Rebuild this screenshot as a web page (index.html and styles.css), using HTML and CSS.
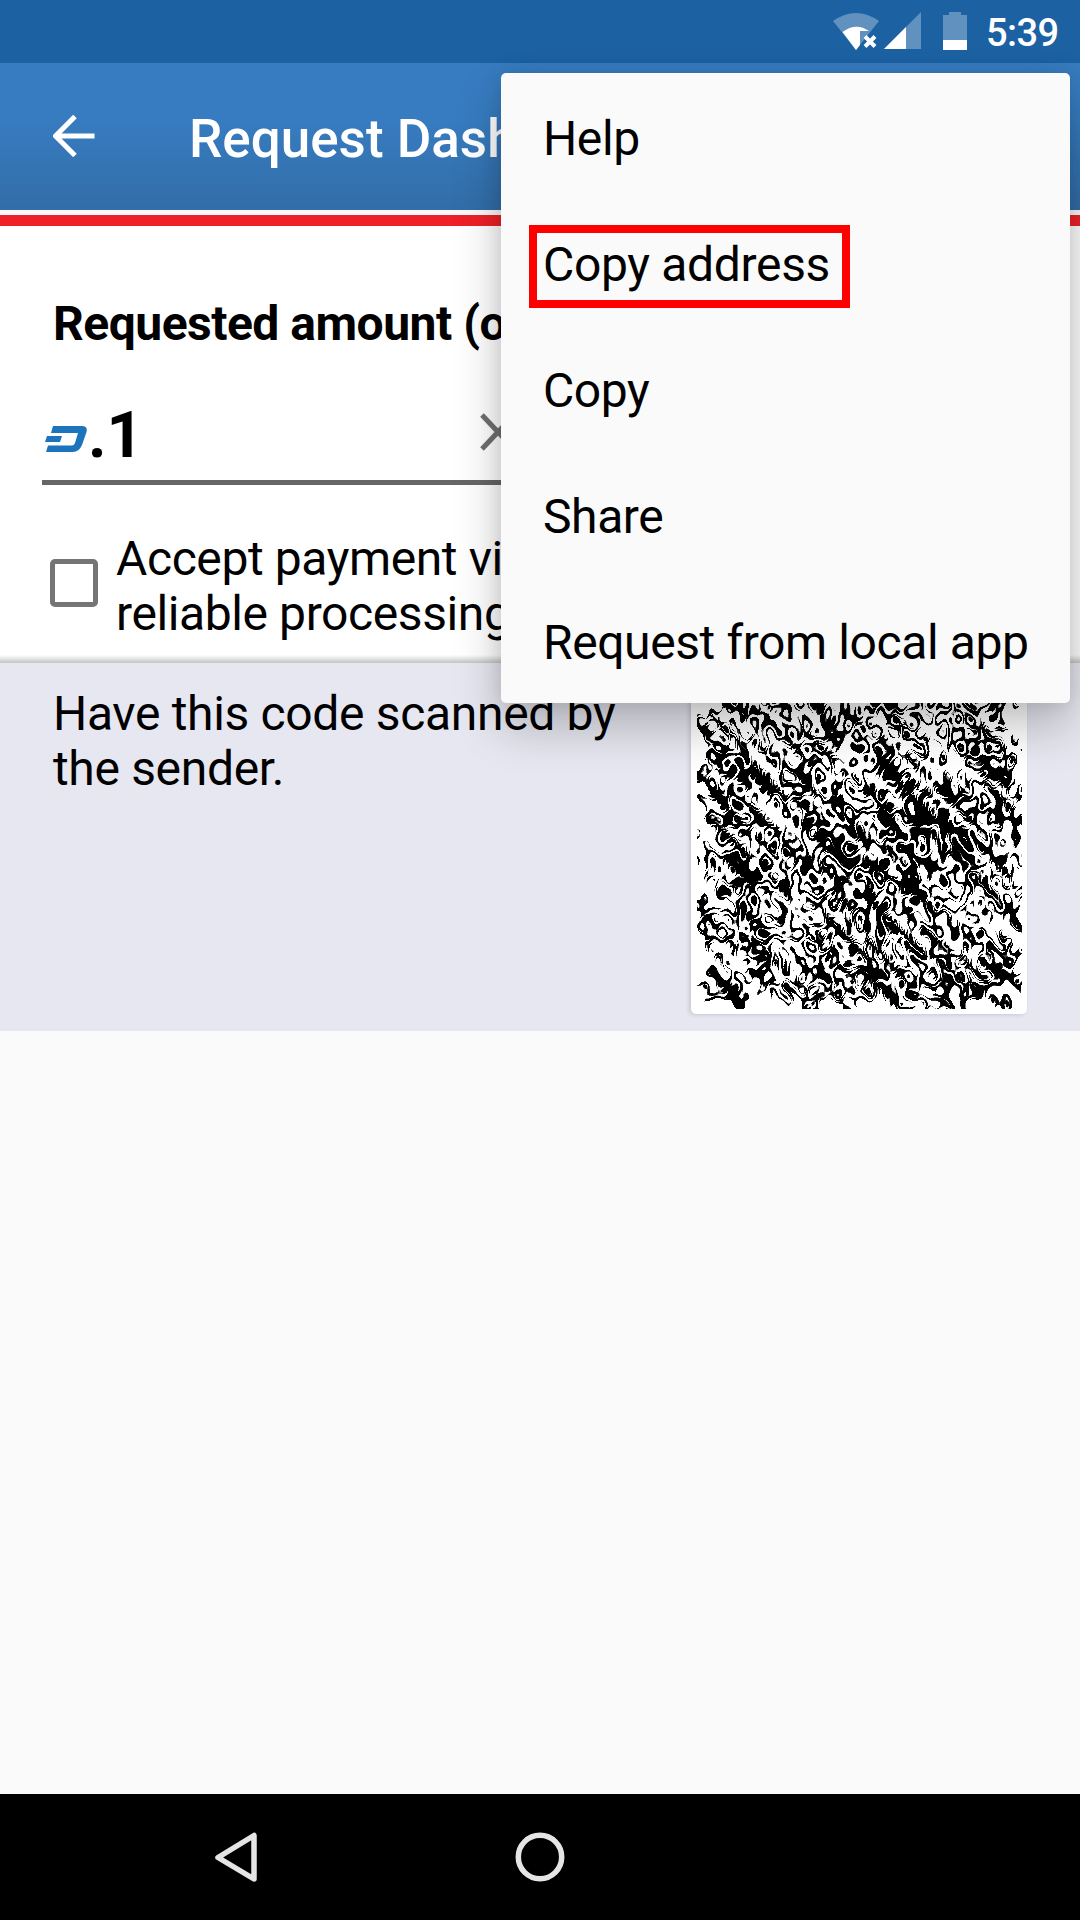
FILE: index.html
```html
<!DOCTYPE html>
<html lang="en">
<head>
<meta charset="utf-8">
<title>Request Dash</title>
<link rel="stylesheet" href="styles.css">
</head>
<body>
<div class="screen">
  <header class="status-bar">
    <svg class="status-icons" width="145" height="63" viewBox="0 0 145 63">
      <path class="dim" d="M0 21Q23 5 46 21L23 50Z"/>
      <path class="lit" d="M9.500 32Q23 22 36 31H27V45L23 50Z"/>
      <path class="cross" d="M32 36.500l10 10M42 36.500l-10 10"/>
      <path class="dim" d="M88 12V49H51Z"/>
      <path class="lit" d="M73 27V49H51Z"/>
      <path class="dim" d="M110 15h6v-3h12v3h6v25h-24Z"/>
      <path class="lit" d="M110 40h24v10h-24Z"/>
    </svg>
    <span class="clock">5:39</span>
  </header>
  <div class="toolbar">
    <svg class="back" width="42" height="42" viewBox="0 0 42 42"><path d="M41.500 21H4M22 1.500L2.500 21L22 40.500"/></svg>
    <h1 class="title">Request Dash</h1>
  </div>
  <div class="network-line"></div>
  <main>
    <section class="form">
      <div class="label">Requested amount (o</div>
      <div class="amount">
        <svg class="dash" width="42" height="28" viewBox="0 0 42 28"><path d="M8 1H37Q43 1 41.500 7L37 20Q34 27 28 27H1L3 20.500H27Q29 20.500 30 18L33 8H6ZM2 11H17L15 17H0Z"/></svg>
        <span class="value">.1</span>
        <svg class="clear" width="36" height="38" viewBox="0 0 36 38"><path d="M2 2L34 36M34 2L2 36"/></svg>
      </div>
      <div class="accept">
        <span class="checkbox"></span>
        <span>Accept payment vi<br>reliable processing</span>
      </div>
    </section>
    <section class="scan">
      <p class="hint">Have this code scanned by the sender.</p>
      <div class="code-card">
        <svg width="325" height="325" viewBox="0 0 325 325">
          <filter id="swirl" x="0" y="0" width="325" height="325" filterUnits="userSpaceOnUse" color-interpolation-filters="sRGB">
            <feTurbulence type="fractalNoise" baseFrequency="0.095 0.07" numOctaves="1" seed="23" result="warp"/>
            <feDisplacementMap in="SourceGraphic" in2="warp" scale="90" xChannelSelector="R" yChannelSelector="R"/>
          </filter>
          <g filter="url(#swirl)"><path id="modules"/></g>
        </svg>
      </div>
    </section>
  </main>
  <nav class="nav-bar">
    <svg width="1080" height="126" viewBox="0 0 1080 126">
      <path d="M218 63.500L254 41.500V85Z"/>
      <circle cx="540" cy="63" r="21.700"/>
    </svg>
  </nav>
  <div class="menu">
    <div class="item">Help</div>
    <div class="item"><span class="marked">Copy address</span></div>
    <div class="item">Copy</div>
    <div class="item">Share</div>
    <div class="item">Request from local app</div>
  </div>
</div>
<script src="code.js"></script>
</body>
</html>
```
FILE: code.js
```js
// Fills the code card with a fixed pseudo-random grid of modules.
const count = 37;
const size = 319 / count;
let state = 4711;
let d = "";
for (let row = 0; row < count; row++) {
  for (let col = 0; col < count; col++) {
    state = (state * 1664525 + 1013904223) % 4294967296;
    if (state / 4294967296 < 0.5) {
      d += `M${3 + col * size} ${3 + row * size}h${size}v${size}h${-size}z`;
    }
  }
}
document.getElementById("modules").setAttribute("d", d);
```
FILE: styles.css
```css
* { box-sizing: border-box; }
body { margin: 0; font-family: Roboto, sans-serif; color: #000; }
svg { display: block; flex: none; }
.screen {
  position: relative;
  display: flex;
  flex-direction: column;
  width: 1080px;
  height: 1920px;
  overflow: hidden;
  background: #fafafa;
  font-size: 48px;
  line-height: 55px;
  letter-spacing: -.4px;
}
.status-bar {
  display: flex;
  height: 63px;
  padding-left: 833px;
  background: #1c61a2;
}
.dim { fill: #6192bf; }
.lit { fill: #fff; }
.cross { fill: none; stroke: #fff; stroke-width: 4; }
.clock { margin-left: 8px; color: #fff; font-size: 38px; font-weight: 500; line-height: 67px; letter-spacing: -.6px; }
.toolbar {
  display: flex;
  align-items: center;
  gap: 94px;
  height: 147px;
  padding-left: 53px;
  background: linear-gradient(#377cc0 0%, #377cc0 38%, #326da8 100%);
}
.back { margin-top: -1px; fill: none; stroke: #fff; stroke-width: 5; }
.title { margin: 5px 0 0; color: #fff; font-size: 53px; font-weight: 500; letter-spacing: 0; white-space: nowrap; }
.network-line { height: 16px; border-top: 5px solid #fafafa; background: #ed2127; }
.form {
  display: flex;
  flex-direction: column;
  height: 437px;
  padding: 70px 0 0 42px;
  background: linear-gradient(#fff 0, #fff 429px, #c4c4c4 437px);
}
.label { padding-left: 11px; font-weight: 700; letter-spacing: -.5px; white-space: nowrap; }
.amount {
  display: flex;
  align-items: center;
  width: 498px;
  height: 108px;
  margin-top: 26px;
  padding: 8px 0 0 3px;
  border-bottom: 5px solid #666;
}
.dash { margin-top: 13px; fill: #1c75bc; }
.value { width: 393px; margin-top: 5px; padding-left: 1px; font-size: 64px; font-weight: 700; letter-spacing: 0; }
.clear { margin-top: -2px; fill: none; stroke: #707070; stroke-width: 5; }
.accept { display: flex; align-items: center; gap: 18px; margin-top: 46px; padding-left: 8px; }
.checkbox { width: 48px; height: 48px; margin-top: -6px; border: 5px solid #757575; border-radius: 5px; }
.scan {
  display: flex;
  justify-content: space-between;
  height: 368px;
  padding: 16px 53px 0;
  background: #e7e7f1;
}
.hint { width: 575px; margin: 7px 0 0; letter-spacing: -.33px; }
.code-card {
  width: 336px;
  height: 335px;
  padding: 5px 5px 5px 6px;
  border-radius: 5px;
  background: #fff;
  box-shadow: -2px 1px 4px #0002;
}
.nav-bar { margin-top: auto; background: #000; }
.nav-bar svg { fill: none; stroke: #e5e5e5; stroke-width: 5.500; stroke-linejoin: round; }
.menu {
  position: absolute;
  top: 73px;
  left: 501px;
  width: 569px;
  border-radius: 5px;
  background: #fafafa;
  box-shadow: 0 24px 48px rgba(0, 0, 0, .24), 0 0 20px rgba(0, 0, 0, .1);
}
.item { display: flex; align-items: center; height: 126px; padding: 4px 0 0 42px; white-space: nowrap; }
.marked {
  height: 83px;
  width: 321px;
  margin: 5px 0 0 -14px;
  padding: 4px 0 0 6px;
  border: 8px solid #f00;
  letter-spacing: -.33px;
}
```
